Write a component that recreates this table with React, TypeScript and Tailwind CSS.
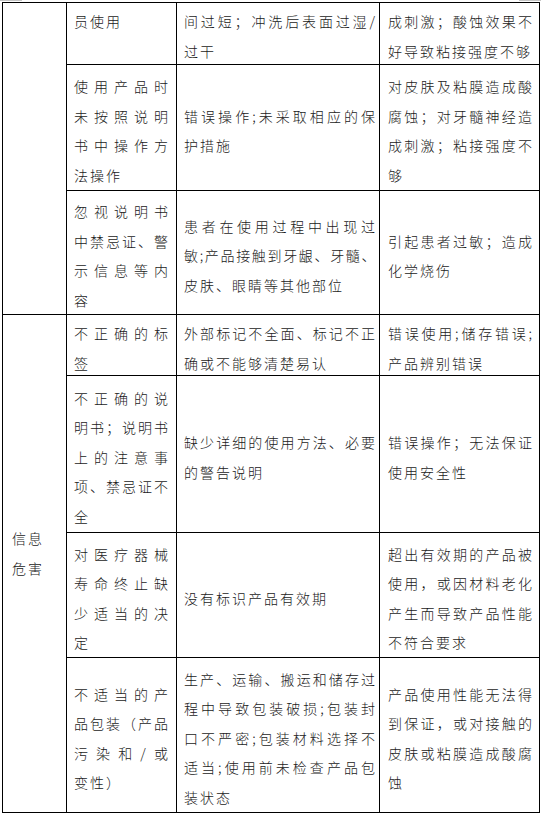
import React from "react";

type Ln = string | { t: string; tight: boolean };

const PAD: Record<number, string> = {
  2: "pl-[7px] pr-[6px]",
  3: "pl-[7px] pr-[2px]",
  4: "pl-[8px] pr-[5px]",
};

function Cell({
  lines,
  col,
  top = false,
}: {
  lines: Ln[];
  col: number;
  top?: boolean;
}) {
  return (
    <div
      className={
        "bg-white flex flex-col overflow-visible " +
        PAD[col] +
        " " +
        (top ? "justify-start pt-[4px]" : "justify-center pt-[7px]")
      }
    >
      {lines.map((l, i) => {
        const text = typeof l === "string" ? l : l.t;
        const tight = typeof l !== "string" && l.tight;
        const last = i === lines.length - 1;
        return (
          <div
            key={i}
            className={
              "whitespace-nowrap " +
              (tight ? "tracking-[1.5px] " : "tracking-[2px] ") +
              (last ? "text-left" : "text-justify [text-align-last:justify]")
            }
          >
            {text}
          </div>
        );
      })}
    </div>
  );
}

export default function App() {
  return (
    <div className="w-[541px] h-[814px] bg-white overflow-hidden font-['Noto_Sans_CJK_SC','Noto_Sans_CJK_JP',sans-serif] font-light text-[14px] leading-[29.5px] text-[#1a1a1a]">
      <div className="flex h-[1px] justify-between">
        <div className="w-[22px] bg-[#c4c4c4]" />
        <div className="w-[22px] bg-[#c4c4c4]" />
      </div>
      <div className="mt-[1px] ml-[2px] w-[538px] grid grid-cols-[63px_109px_202px_159px] grid-rows-[61px_125px_123px_60px_156px_124px_154px] gap-px bg-black p-px">
        {/* group 1 */}
        <div className="bg-white row-span-3" />
        <Cell col={2} top lines={["员使用"]} />
        <Cell col={3} top lines={["间过短；冲洗后表面过湿/", "过干"]} />
        <Cell col={4} top lines={["成刺激；酸蚀效果不", "好导致粘接强度不够"]} />

        <Cell col={2} lines={["使用产品时", "未按照说明", "书中操作方", "法操作"]} />
        <Cell col={3} lines={["错误操作;未采取相应的保", "护措施"]} />
        <Cell
          col={4}
          lines={["对皮肤及粘膜造成酸", "腐蚀；对牙髓神经造", "成刺激；粘接强度不", "够"]}
        />

        <Cell col={2} lines={["忽视说明书", "中禁忌证、警", "示信息等内", "容"]} />
        <Cell
          col={3}
          lines={[
            "患者在使用过程中出现过",
            { t: "敏;产品接触到牙龈、牙髓、", tight: true },
            "皮肤、眼睛等其他部位",
          ]}
        />
        <Cell col={4} lines={["引起患者过敏；造成", "化学烧伤"]} />

        {/* group 2 */}
        <div className="bg-white row-span-4 flex flex-col justify-center pl-[9px] pb-[20px] tracking-[2px]">
          <div>信息</div>
          <div>危害</div>
        </div>
        <Cell col={2} lines={["不正确的标", "签"]} />
        <Cell col={3} lines={["外部标记不全面、标记不正", "确或不能够清楚易认"]} />
        <Cell col={4} lines={["错误使用;储存错误;", "产品辨别错误"]} />

        <Cell
          col={2}
          lines={["不正确的说", "明书；说明书", "上的注意事", "项、禁忌证不", "全"]}
        />
        <Cell col={3} lines={["缺少详细的使用方法、必要", "的警告说明"]} />
        <Cell col={4} lines={["错误操作；无法保证", "使用安全性"]} />

        <Cell col={2} lines={["对医疗器械", "寿命终止缺", "少适当的决", "定"]} />
        <Cell col={3} lines={["没有标识产品有效期"]} />
        <Cell
          col={4}
          lines={["超出有效期的产品被", "使用，或因材料老化", "产生而导致产品性能", "不符合要求"]}
        />

        <Cell col={2} lines={["不适当的产", "品包装（产品", "污染和/或", "变性）"]} />
        <Cell
          col={3}
          lines={[
            "生产、运输、搬运和储存过",
            "程中导致包装破损;包装封",
            "口不严密;包装材料选择不",
            "适当;使用前未检查产品包",
            "装状态",
          ]}
        />
        <Cell
          col={4}
          lines={["产品使用性能无法得", "到保证，或对接触的", "皮肤或粘膜造成酸腐", "蚀"]}
        />
      </div>
    </div>
  );
}
